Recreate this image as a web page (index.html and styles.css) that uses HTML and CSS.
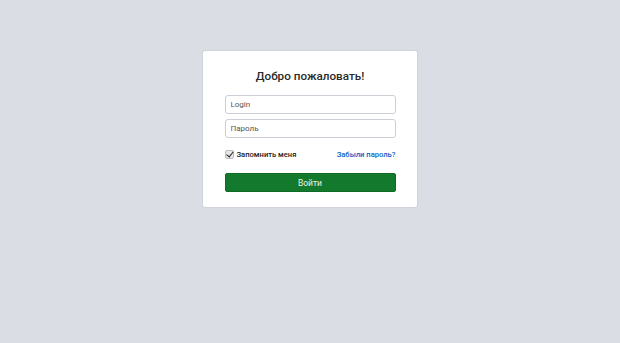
FILE: index.html
```html
<!DOCTYPE html>
<html lang="ru">
<head>
  <meta charset="UTF-8">
  <meta name="viewport" content="width=device-width, initial-scale=1.0">
  <title>Вход</title>
  <link rel="stylesheet" href="styles.css">
</head>
<body>
  <div class="page">
    <form class="card">
      <h1 class="card-title">Добро пожаловать!</h1>
      <input class="field" type="text" placeholder="Login">
      <input class="field" type="password" placeholder="Пароль">
      <div class="row">
        <label class="remember">
          <input type="checkbox" checked>
          <span>Запомнить меня</span>
        </label>
        <a href="#" class="forgot">Забыли пароль?</a>
      </div>
      <button type="button" class="submit">Войти</button>
    </form>
  </div>
</body>
</html>
```

FILE: styles.css
```css
body {
  margin: 0;
  padding: 0;
  background-color: #dadde4;
  font-family: Roboto, "Liberation Sans", Arial, sans-serif;
  color: #222;
}

.page {
  display: flex;
  justify-content: center;
  padding-top: 50px;
}

.card {
  width: 216px;
  box-sizing: border-box;
  padding: 16px 21px 15px 22px;
  background: #fff;
  border: 1px solid #cfd3da;
  border-radius: 3px;
  display: flex;
  flex-direction: column;
  margin-left: -1px;
}

.card-title {
  margin: 0 0 10px;
  font-size: 11.7px;
  font-weight: 500;
  text-align: center;
  color: #2a2a2a;
  line-height: 18px;
}

.field {
  height: 19px;
  margin: 0 0 5px;
  padding: 0 5px;
  font-size: 8px;
  font-family: inherit;
  border: 1px solid #ccd0d6;
  border-radius: 3px;
  box-sizing: border-box;
}

.field::placeholder {
  color: #555;
}

.row {
  display: flex;
  justify-content: space-between;
  align-items: center;
  height: 10px;
  margin-top: 6px;
  margin-bottom: 14px;
  font-size: 7.6px;
  font-weight: 500;
}

.remember {
  display: flex;
  align-items: center;
  gap: 3px;
  color: #222;
}

.remember input {
  appearance: none;
  width: 9px;
  height: 9px;
  margin: 0;
  border: 1px solid #bbb;
  border-radius: 2px;
  background: #e6e6e6;
  position: relative;
}

.remember input:checked::after {
  content: "";
  position: absolute;
  left: 2px;
  top: -1px;
  width: 3px;
  height: 6px;
  border: solid #222;
  border-width: 0 1.5px 1.5px 0;
  transform: rotate(40deg);
}

.forgot {
  color: #0a5fc4;
  text-decoration: none;
}

.submit {
  height: 19px;
  background-color: #137a2d;
  color: #e8f2ea;
  font-size: 8.5px;
  font-family: inherit;
  border: 1px solid #0f6a26;
  border-radius: 2px;
  cursor: pointer;
}
```
